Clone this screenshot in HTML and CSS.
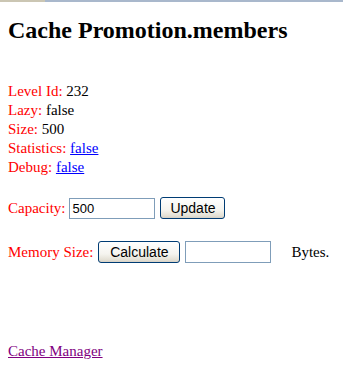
FILE: index.html
```html
<!DOCTYPE html>
<html lang="en">
<head>
<meta charset="UTF-8">
<title>Cache Promotion.members</title>
<link rel="stylesheet" href="styles.css">
</head>
<body>
<div class="topbar"><span class="topbar-left"></span></div>
<div class="page">
<h1>Cache Promotion.members</h1>

<div class="info">
    <div><span class="label">Level Id:</span> 232</div>
    <div><span class="label">Lazy:</span> false</div>
    <div><span class="label">Size:</span> 500</div>
    <div><span class="label">Statistics:</span> <a href="#" class="link">false</a></div>
    <div><span class="label">Debug:</span> <a href="#" class="link">false</a></div>
</div>

<form class="row row-capacity">
    <label class="label" for="capacity">Capacity:</label>
    <input type="text" id="capacity" class="field" value="500">
    <button type="button" class="btn btn-update">Update</button>
</form>

<form class="row row-memory">
    <span class="label">Memory Size:</span>
    <button type="button" class="btn btn-calc">Calculate</button>
    <input type="text" class="field field-memory" readonly>
    <span class="unit">Bytes.</span>
</form>

<a href="#" class="link visited manager">Cache Manager</a>
</div>
</body>
</html>
```

FILE: styles.css
```css
body {
  margin: 0;
  font-family: 'Liberation Serif', 'Times New Roman', serif;
  font-size: 15px;
  line-height: 19px;
  color: #000;
  background: #fff;
}
.topbar {
  height: 2px;
  background: #a9b8cc;
  display: flex;
}
.topbar-left {
  width: 45px;
  background: #cbc6b3;
}
.page {
  padding: 0 8px;
}
h1 {
  font-size: 24px;
  line-height: 28px;
  font-weight: bold;
  margin: 14px 0 38px;
}
.label {
  color: #ff0000;
}
.link {
  color: #0000ff;
}
.link.visited {
  color: #800080;
}
.row {
  display: flex;
  align-items: center;
  height: 22px;
  margin: 0;
}
.row-capacity {
  margin-top: 20px;
}
.row-memory {
  margin-top: 22px;
}
.field {
  box-sizing: border-box;
  width: 86px;
  height: 21px;
  border: 1px solid #7f9db9;
  padding: 1px 2px;
  font-family: 'Liberation Sans', Arial, sans-serif;
  font-size: 13px;
  margin: 0 5px 0 4px;
  outline: none;
}
.field-memory {
  height: 22px;
  margin: 0;
}
.btn {
  box-sizing: border-box;
  height: 22px;
  border: 1px solid #003c74;
  border-radius: 3px;
  background: linear-gradient(to bottom, #ffffff 0%, #f5f4ef 60%, #e3dfd4 90%, #d6d0c5 100%);
  font-family: 'Liberation Sans', Arial, sans-serif;
  font-size: 14px;
  padding: 0;
  color: #000;
}
.btn-update {
  width: 65px;
}
.btn-calc {
  width: 82px;
  margin: 0 5px 0 5px;
}
.unit {
  margin-left: 20px;
}
.manager {
  display: inline-block;
  margin-top: 79px;
}
```
